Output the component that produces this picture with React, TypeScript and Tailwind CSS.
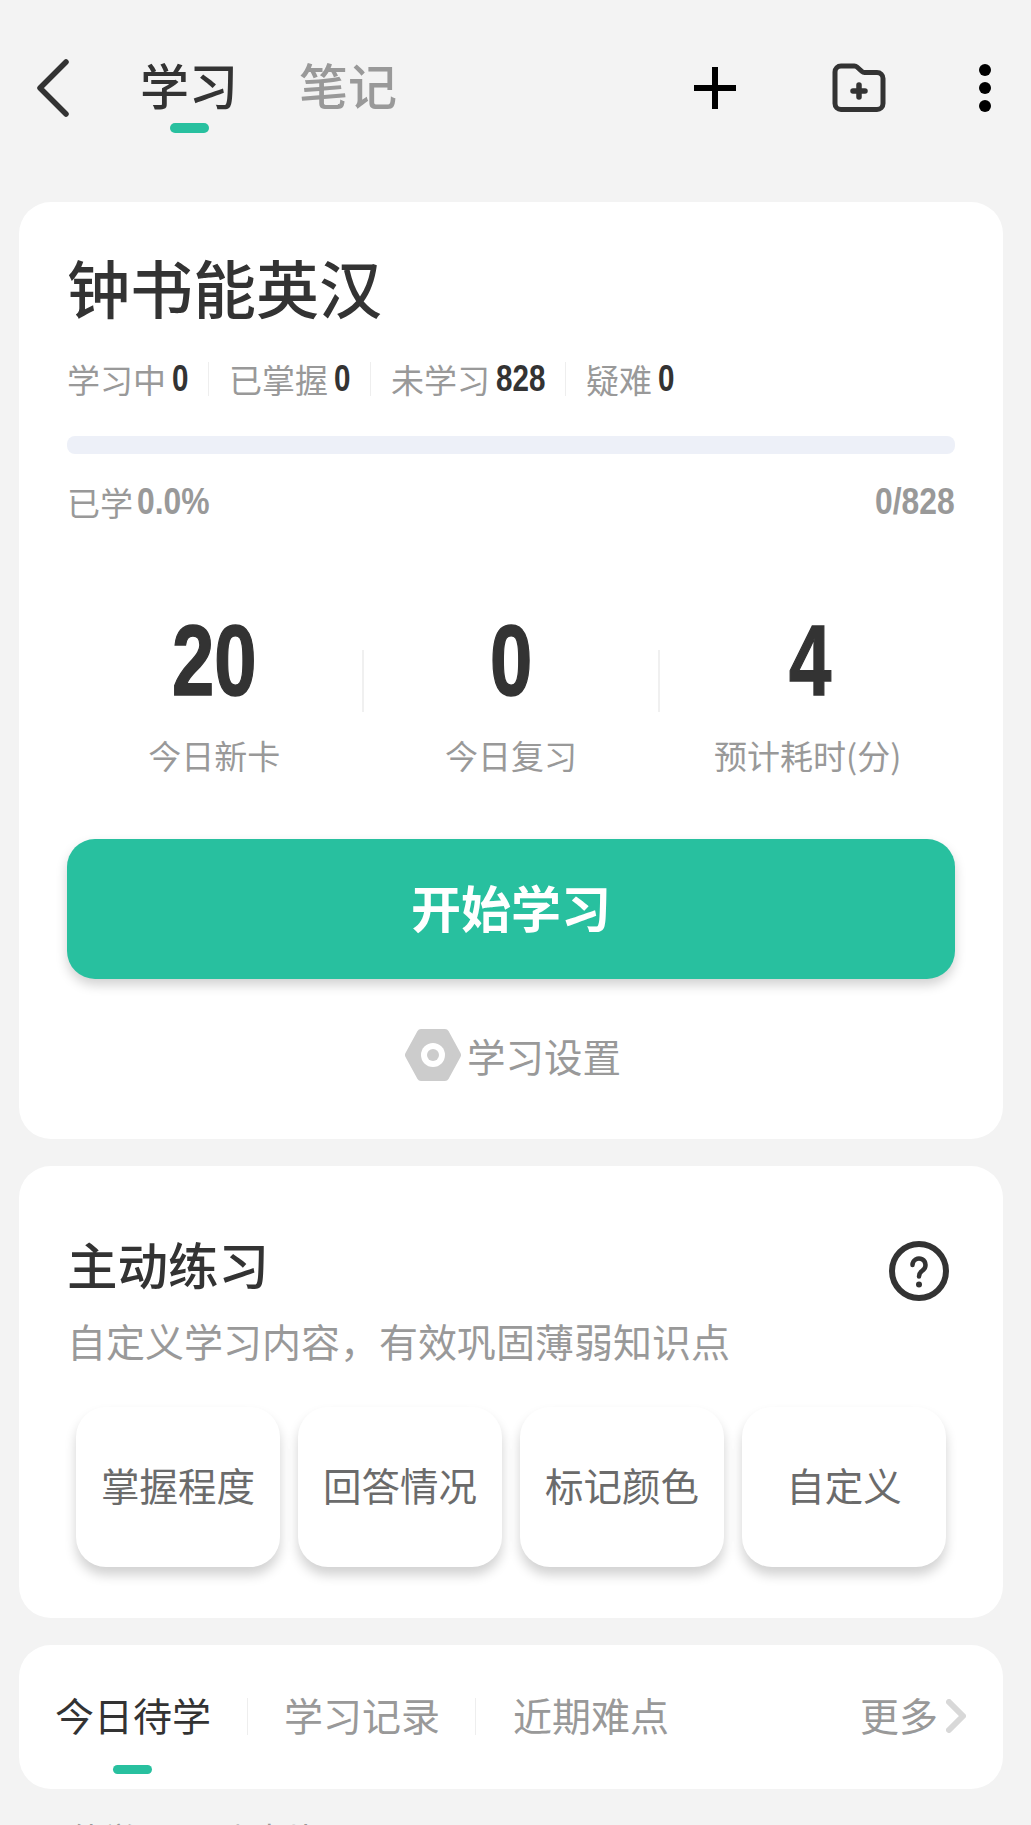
const cjk = { fontFamily: '"Noto Sans CJK SC", sans-serif' }

// the digits in the reference are a condensed face, so Liberation Sans gets squeezed
function Num({ children, className }: { children: string; className: string }) {
  return (
    <span className={`inline-block origin-left whitespace-nowrap font-bold [font-family:'Liberation_Sans',sans-serif] ${className}`}>
      {children}
    </span>
  )
}

function StatLabel({ label, value, width, last }: { label: string; value: string; width: string; last?: boolean }) {
  return (
    <div className="flex items-center">
      <span className="text-[33px] leading-[44px] text-[#999]">{label}</span>
      <Num className={`ml-[6px] scale-x-[0.8] text-[37px] leading-[44px] text-[#333] ${width}`}>{value}</Num>
      {!last && <div className="mx-[20px] h-[34px] w-px bg-[#eee]" />}
    </div>
  )
}

function Metric({ value, label, width }: { value: string; label: string; width: string }) {
  return (
    <div className="flex flex-1 flex-col items-center">
      <Num className={`h-[104px] scale-x-[0.76] text-[100px] leading-[104px] text-[#333] [-webkit-text-stroke:1.5px_#333] ${width}`}>{value}</Num>
      <span className="mt-[21px] text-[33px] leading-[44px] text-[#999]">{label}</span>
    </div>
  )
}

export default function App() {
  return (
    <div className="h-[1825px] overflow-hidden bg-[#f3f3f3]" style={cjk}>
      {/* Header */}
      <div className="flex h-[202px] items-start pl-[36px] pr-[39px] pt-[60px]">
        <svg width="34" height="58" viewBox="0 0 34 58" className="mt-[-1px] shrink-0" fill="none" stroke="#333" strokeWidth="5.5" strokeLinecap="round" strokeLinejoin="round">
          <path d="M30 3 L4 29 L30 55" />
        </svg>
        <div className="relative ml-[70px] mt-[-4px] text-[49px] font-medium leading-[56px] text-[#333]">
          学习
          <div className="absolute left-[30px] top-[67px] h-[10px] w-[39px] rounded-full bg-[#28c09f]" />
        </div>
        <div className="ml-[61px] mt-[-4px] text-[49px] font-medium leading-[56px] text-[#999]">笔记</div>
        <svg width="42" height="42" viewBox="0 0 42 42" className="ml-auto mt-[7px] shrink-0" fill="#000">
          <rect x="18" y="0" width="6" height="42" />
          <rect x="0" y="18" width="42" height="6" />
        </svg>
        <svg width="54" height="50" viewBox="0 0 54 50" className="ml-[96px] mt-[3px] shrink-0" fill="none" stroke="#333" strokeWidth="5" strokeLinejoin="round">
          <path d="M3 9 a6 6 0 0 1 6 -6 h13 a4 4 0 0 1 3 1 l5 4.5 a4 4 0 0 0 3 1 h12 a6 6 0 0 1 6 6 v25 a6 6 0 0 1 -6 6 h-36 a6 6 0 0 1 -6 -6 z" />
          <path d="M21 28 h12 M27 22 v12" strokeWidth="5.5" strokeLinecap="round" />
        </svg>
        <svg width="14" height="50" viewBox="0 0 14 50" className="ml-[92px] mt-[3px] shrink-0" fill="#000">
          <circle cx="7" cy="7" r="6" />
          <circle cx="7" cy="25" r="6" />
          <circle cx="7" cy="43" r="6" />
        </svg>
      </div>

      {/* Study card */}
      <div className="ml-[19px] mr-[28px] h-[937px] rounded-[32px] bg-white px-[48px] pt-[48px]">
        <h1 className="text-[63px] font-medium leading-[72px] text-[#333]">钟书能英汉</h1>
        <div className="mt-[35px] flex items-center">
          <StatLabel label="学习中" value="0" width="w-[16px]" />
          <StatLabel label="已掌握" value="0" width="w-[16px]" />
          <StatLabel label="未学习" value="828" width="w-[49px]" />
          <StatLabel label="疑难" value="0" width="w-[16px]" last />
        </div>
        <div className="mt-[35px] h-[18px] rounded-[8px] bg-[#edf0f8]" />
        <div className="mt-[26px] flex items-center justify-between text-[33px] leading-[44px] text-[#999]">
          <div className="flex items-center">
            已学
            <Num className="ml-[4px] w-[74px] scale-x-[0.86] text-[37px] leading-[44px] text-[#999]">0.0%</Num>
          </div>
          <Num className="w-[80px] scale-x-[0.86] text-[37px] leading-[44px] text-[#999]">0/828</Num>
        </div>
        <div className="mt-[84px] flex">
          <Metric value="20" label="今日新卡" width="w-[84px]" />
          <div className="mt-[42px] h-[62px] w-[2px] shrink-0 bg-[#f0f0f0]" />
          <Metric value="0" label="今日复习" width="w-[42px]" />
          <div className="mt-[42px] h-[62px] w-[2px] shrink-0 bg-[#f0f0f0]" />
          <Metric value="4" label="预计耗时(分)" width="w-[38px]" />
        </div>
        <button className="mt-[62px] flex h-[140px] w-full items-center justify-center rounded-[28px] bg-[#28c09f] pb-[6px] text-[50px] font-bold text-white shadow-[0_6px_12px_rgba(0,0,0,0.18)]">
          开始学习
        </button>
        <div className="mt-[50px] flex items-center justify-center pl-[4px]">
          <svg width="56" height="52" viewBox="0 0 56 52" className="shrink-0" fill="#ccc">
            <polygon points="4,26 16,4 40,4 52,26 40,48 16,48" stroke="#ccc" strokeWidth="8" strokeLinejoin="round" />
            <circle cx="28" cy="26" r="12" fill="#fff" />
            <circle cx="28" cy="26" r="6" />
          </svg>
          <span className="ml-[6px] text-[38.5px] leading-[52px] text-[#999]">学习设置</span>
        </div>
      </div>

      {/* Practice card */}
      <div className="ml-[19px] mr-[28px] mt-[27px] h-[452px] rounded-[32px] bg-white pl-[48px] pr-[54px] pt-[66px]">
        <div className="flex items-start justify-between">
          <h2 className="mt-[-2px] text-[50.5px] font-medium leading-[66px] text-[#333]">主动练习</h2>
          <svg width="60" height="60" viewBox="0 0 60 60" className="mt-[9px] shrink-0" fill="none" stroke="#333">
            <circle cx="30" cy="30" r="27" strokeWidth="6" />
            <path d="M23.5 24 a6.5 6.5 0 1 1 10 5.5 c-2.5 1.7 -3.5 3 -3.5 6" strokeWidth="4.5" strokeLinecap="round" />
            <circle cx="30" cy="43.5" r="3" fill="#333" stroke="none" />
          </svg>
        </div>
        <p className="mt-[13px] text-[39px] leading-[52px] text-[#999]">自定义学习内容，有效巩固薄弱知识点</p>
        <div className="mt-[41px] flex gap-[18px] pl-[9px]">
          {['掌握程度', '回答情况', '标记颜色', '自定义'].map(label => (
            <div
              key={label}
              className="flex h-[160px] w-[204px] items-center justify-center rounded-[30px] bg-white pb-[5px] text-[38.5px] text-[#6b6b6b] shadow-[0_8px_12px_rgba(0,0,0,0.18)]"
            >
              {label}
            </div>
          ))}
        </div>
      </div>

      {/* Tabs card */}
      <div className="relative ml-[19px] mr-[28px] mt-[27px] flex h-[144px] items-start rounded-[32px] bg-white pl-[36px] pr-[37px] pt-[43px] text-[39px] leading-[52px] text-[#999]">
        <span className="text-[#333]">今日待学</span>
        <div className="ml-[36px] mr-[36px] mt-[10px] h-[37px] w-px bg-[#eee]" />
        <span>学习记录</span>
        <div className="ml-[35px] mr-[37px] mt-[10px] h-[37px] w-px bg-[#eee]" />
        <span>近期难点</span>
        <span className="ml-auto">更多</span>
        <svg width="20" height="34" viewBox="0 0 20 34" className="ml-[8px] mt-[11px] shrink-0" fill="none" stroke="#d8d8d8" strokeWidth="6" strokeLinecap="round" strokeLinejoin="round">
          <path d="M3 3 L17 17 L3 31" />
        </svg>
        <div className="absolute left-[94px] top-[120px] h-[9px] w-[39px] rounded-full bg-[#28c09f]" />
      </div>

      <div className="mt-[27px] pl-[70px] text-[33px] leading-[44px] text-[#999]">待学习 20 张卡片</div>
    </div>
  )
}
